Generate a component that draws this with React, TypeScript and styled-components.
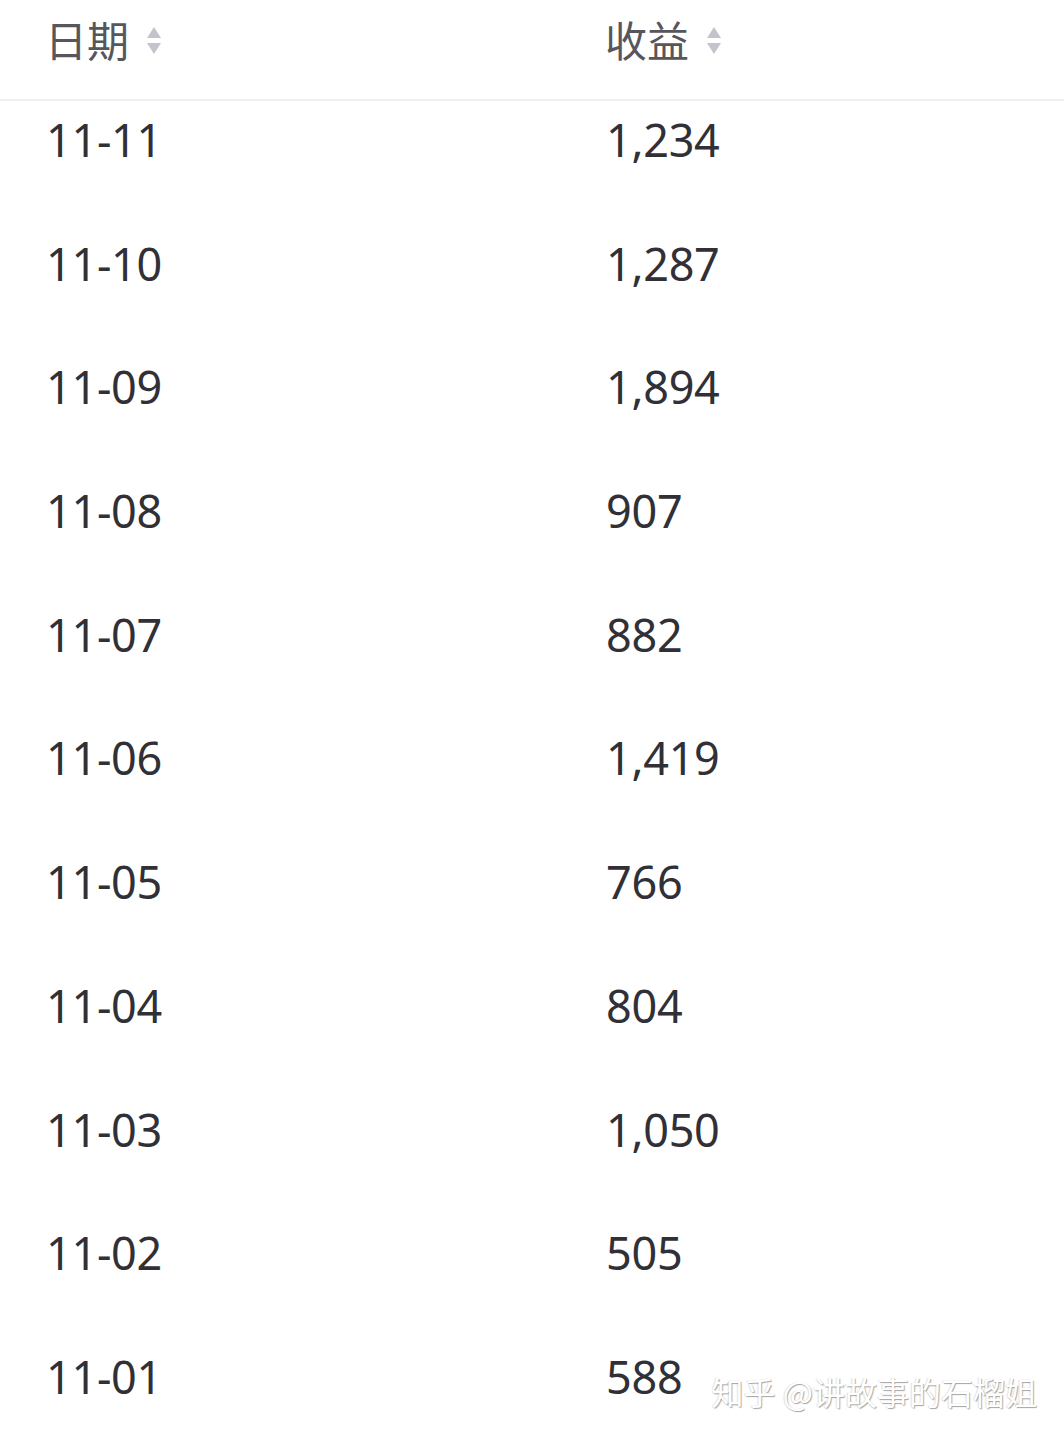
import React from 'react';
import styled, { createGlobalStyle } from 'styled-components';

const GlobalStyle = createGlobalStyle`
    html, body {
        margin: 0;
        padding: 0;
        background: #ffffff;
    }
    body {
        font-family: "Noto Sans", "Noto Sans CJK SC", sans-serif;
        overflow: hidden;
    }
`;

const Styled = {
    Page: styled.div`
        position: relative;
        width: 1064px;
        height: 1440px;
        overflow: hidden;
        background: #fff;
    `,
    Header: styled.div`
        display: grid;
        grid-template-columns: 560px 1fr;
        height: 101px;
        padding-left: 45px;
        border-bottom: 2px solid #f0f0f2;
        box-sizing: border-box;
        align-items: center;
    `,
    HeadCell: styled.div`
        display: flex;
        align-items: center;
        gap: 17px;
        font-family: "Noto Sans CJK SC", sans-serif;
        font-size: 42px;
        color: #56565c;
        line-height: 1;
        padding-bottom: 22px;
    `,
    SortIcon: styled.svg`
        width: 16px;
        height: 32px;
        margin-top: 4px;
    `,
    Row: styled.div`
        display: grid;
        grid-template-columns: 560px 1fr;
        height: 123.7px;
        padding: 15px 0 0 46px;
        box-sizing: border-box;
    `,
    Cell: styled.div`
        font-family: "Noto Sans", sans-serif;
        font-size: 45px;
        line-height: 48px;
        color: #303036;
        letter-spacing: -0.3px;
    `,
    Watermark: styled.div`
        position: absolute;
        right: 27px;
        bottom: 26px;
        font-family: "Noto Sans CJK SC", sans-serif;
        font-size: 32px;
        color: #ffffff;
        text-shadow: 1px 1px 1px rgba(0,0,0,0.35), -1px 0 1px rgba(0,0,0,0.12);
    `,
};

const SortArrows: React.FC = () => (
    <Styled.SortIcon viewBox="0 0 16 32">
        <path d="M8 2 L15 13 L1 13 Z" fill="#c3c3cb" />
        <path d="M1 18 L15 18 L8 29 Z" fill="#c3c3cb" />
    </Styled.SortIcon>
);

const rows: [string, string][] = [
    ['11-11', '1,234'],
    ['11-10', '1,287'],
    ['11-09', '1,894'],
    ['11-08', '907'],
    ['11-07', '882'],
    ['11-06', '1,419'],
    ['11-05', '766'],
    ['11-04', '804'],
    ['11-03', '1,050'],
    ['11-02', '505'],
    ['11-01', '588'],
];

const App: React.FC = () => {
    return (
        <Styled.Page>
            <GlobalStyle />
            <Styled.Header>
                <Styled.HeadCell>
                    日期
                    <SortArrows />
                </Styled.HeadCell>
                <Styled.HeadCell>
                    收益
                    <SortArrows />
                </Styled.HeadCell>
            </Styled.Header>
            {rows.map(([date, income]) => (
                <Styled.Row key={date}>
                    <Styled.Cell>{date}</Styled.Cell>
                    <Styled.Cell>{income}</Styled.Cell>
                </Styled.Row>
            ))}
            <Styled.Watermark>知乎 @讲故事的石榴姐</Styled.Watermark>
        </Styled.Page>
    );
};

export default App;
